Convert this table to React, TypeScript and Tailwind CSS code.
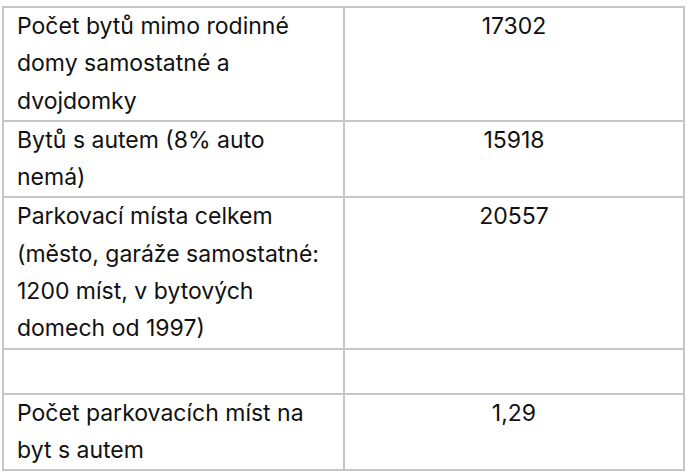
import React from "react";

const rows: { label: string; value: string }[] = [
    { label: "Počet bytů mimo rodinné domy samostatné a dvojdomky", value: "17302" },
    { label: "Bytů s autem (8% auto nemá)", value: "15918" },
    { label: "Parkovací místa celkem (město, garáže samostatné: 1200 míst, v bytových domech od 1997)", value: "20557" },
    { label: "", value: "" },
    { label: "Počet parkovacích míst na byt s autem", value: "1,29" },
];

export default function App() {
    return (
        <div className="w-[689px] h-[474px] bg-white pt-[6px] pl-[2px]" style={{ fontFamily: "Inter, 'Noto Sans', sans-serif" }}>
            <table className="w-[683px] border-collapse table-fixed text-[23px] leading-[37.3px] text-[#111]">
                <tbody>
                    {rows.map((r, i) => (
                        <tr key={i} className={r.label === "" ? "h-[45px]" : ""}>
                            <td className="w-[341px] border-2 border-[#c6c6c6] align-top pl-[13px] pr-[10px] p-0">
                                {r.label}
                            </td>
                            <td className="border-2 border-[#c6c6c6] align-top text-center p-0">
                                {r.value}
                            </td>
                        </tr>
                    ))}
                </tbody>
            </table>
        </div>
    );
}
